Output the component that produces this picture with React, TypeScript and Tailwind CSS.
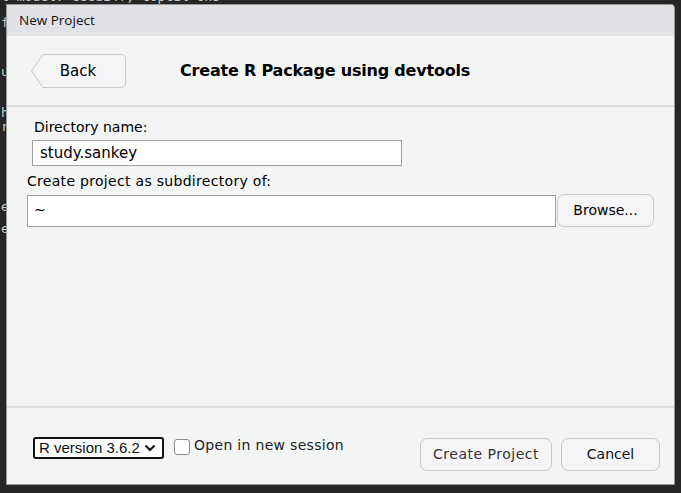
import React from "react";

const ui = { fontFamily: '"DejaVu Sans", "Liberation Sans", sans-serif' };

export default function App() {
  return (
    <div className="relative w-[681px] h-[493px] overflow-hidden bg-[#262626]">
      {/* background editor text, mostly covered */}
      <div
        className="flex flex-col pl-[1px] text-[#c8c8c8] text-[13px] leading-[14px]"
        style={{ fontFamily: '"DejaVu Sans Mono", monospace' }}
      >
        <div className="-mt-[10px]">l  model: cecd14f, coptil ons</div>
        <div className="mt-[12px]">f</div>
        <div className="mt-[35px]">u</div>
        <div className="mt-[27px]">h</div>
        <div>r</div>
        <div className="mt-[66px]">e</div>
        <div className="mt-[8px]">e</div>
      </div>

      {/* dialog */}
      <div
        className="absolute left-[6px] top-[4px] w-[669px] h-[481px] flex flex-col border border-[#9a9a9a] rounded-tr-[4px] overflow-hidden bg-[#f3f4f4]"
        style={ui}
      >
        <div
          className="h-[31px] bg-[#e1e2e5] flex items-center pl-[12px] text-[13.5px] text-[#111]"
          style={{ fontFamily: '"Open Sans", sans-serif' }}
        >
          New Project
        </div>

        {/* header */}
        <div className="h-[71px] border-b-2 border-[#dcdedf] flex items-center">
          <div className="relative ml-[24px] mt-[1px] w-[95px] h-[34px]">
            <svg width="95" height="34" className="absolute left-0 top-0">
              <path
                d="M0.5 17 L12 0.5 H89.5 Q94.5 0.5 94.5 5.5 V28.5 Q94.5 33.5 89.5 33.5 H12 Z"
                fill="#f5f5f7"
                stroke="#c9c9cb"
              />
            </svg>
            <span className="absolute inset-0 flex items-center justify-center pr-[1px] text-[15px] text-[#000]">
              Back
            </span>
          </div>
          <div className="ml-[54px] text-[16px] font-bold text-[#000] tracking-[-0.2px]">
            Create R Package using devtools
          </div>
        </div>

        {/* body */}
        <div className="flex-1 flex flex-col pl-[20px] pr-[20px] pt-[11px] text-[#000]">
          <div className="pl-[7px] text-[14px] leading-[18px]">Directory name:</div>
          <div className="ml-[5px] mt-[4px] w-[370px] h-[26px] bg-white border border-[#a0a0a0] flex items-center pl-[7px] text-[15px]">
            study.sankey
          </div>
          <div className="mt-[6px] text-[14px] leading-[18px] tracking-[0.3px]">
            Create project as subdirectory of:
          </div>
          <div className="mt-[4px] flex items-center">
            <div className="w-[529px] h-[32px] bg-white border border-[#a0a0a0] flex items-center pl-[6px] text-[14px]">
              ~
            </div>
            <button className="ml-[1px] w-[97px] h-[33px] rounded-[7px] border border-[#c9c9cb] bg-[#f5f5f7] text-[14px] text-[#000]">
              Browse...
            </button>
          </div>
        </div>

        {/* footer */}
        <div className="h-[78px] border-t-2 border-[#dcdedf] flex items-start pt-[28px] pl-[26px] pr-[14px]">
          <div
            className="mt-[1px] w-[131px] h-[22px] border-2 border-[#111] rounded-[3px] bg-white flex items-center pl-[4px] text-[15px] text-[#111]"
            style={{ fontFamily: '"Liberation Sans", sans-serif' }}
          >
            <span>R version 3.6.2</span>
            <svg width="12" height="8" viewBox="0 0 12 8" className="ml-[4px]">
              <path d="M1.5 1.5 L6 6 L10.5 1.5" fill="none" stroke="#111" strokeWidth="2.2" />
            </svg>
          </div>
          <div className="mt-[3px] ml-[10px] w-[16px] h-[16px] border border-[#8a8a8a] rounded-[3px] bg-white" />
          <div className="ml-[4px] text-[14px] leading-[18px] tracking-[0.3px] text-[#222]">
            Open in new session
          </div>
          <div className="flex-1" />
          <button className="mt-[2px] w-[132px] h-[33px] rounded-[7px] border border-[#c9c9cb] bg-[#f5f5f7] text-[14px] tracking-[0.5px] text-[#333]">
            Create Project
          </button>
          <button className="mt-[2px] ml-[9px] w-[99px] h-[33px] rounded-[7px] border border-[#c9c9cb] bg-[#f5f5f7] text-[14px] text-[#111]">
            Cancel
          </button>
        </div>
      </div>
    </div>
  );
}
